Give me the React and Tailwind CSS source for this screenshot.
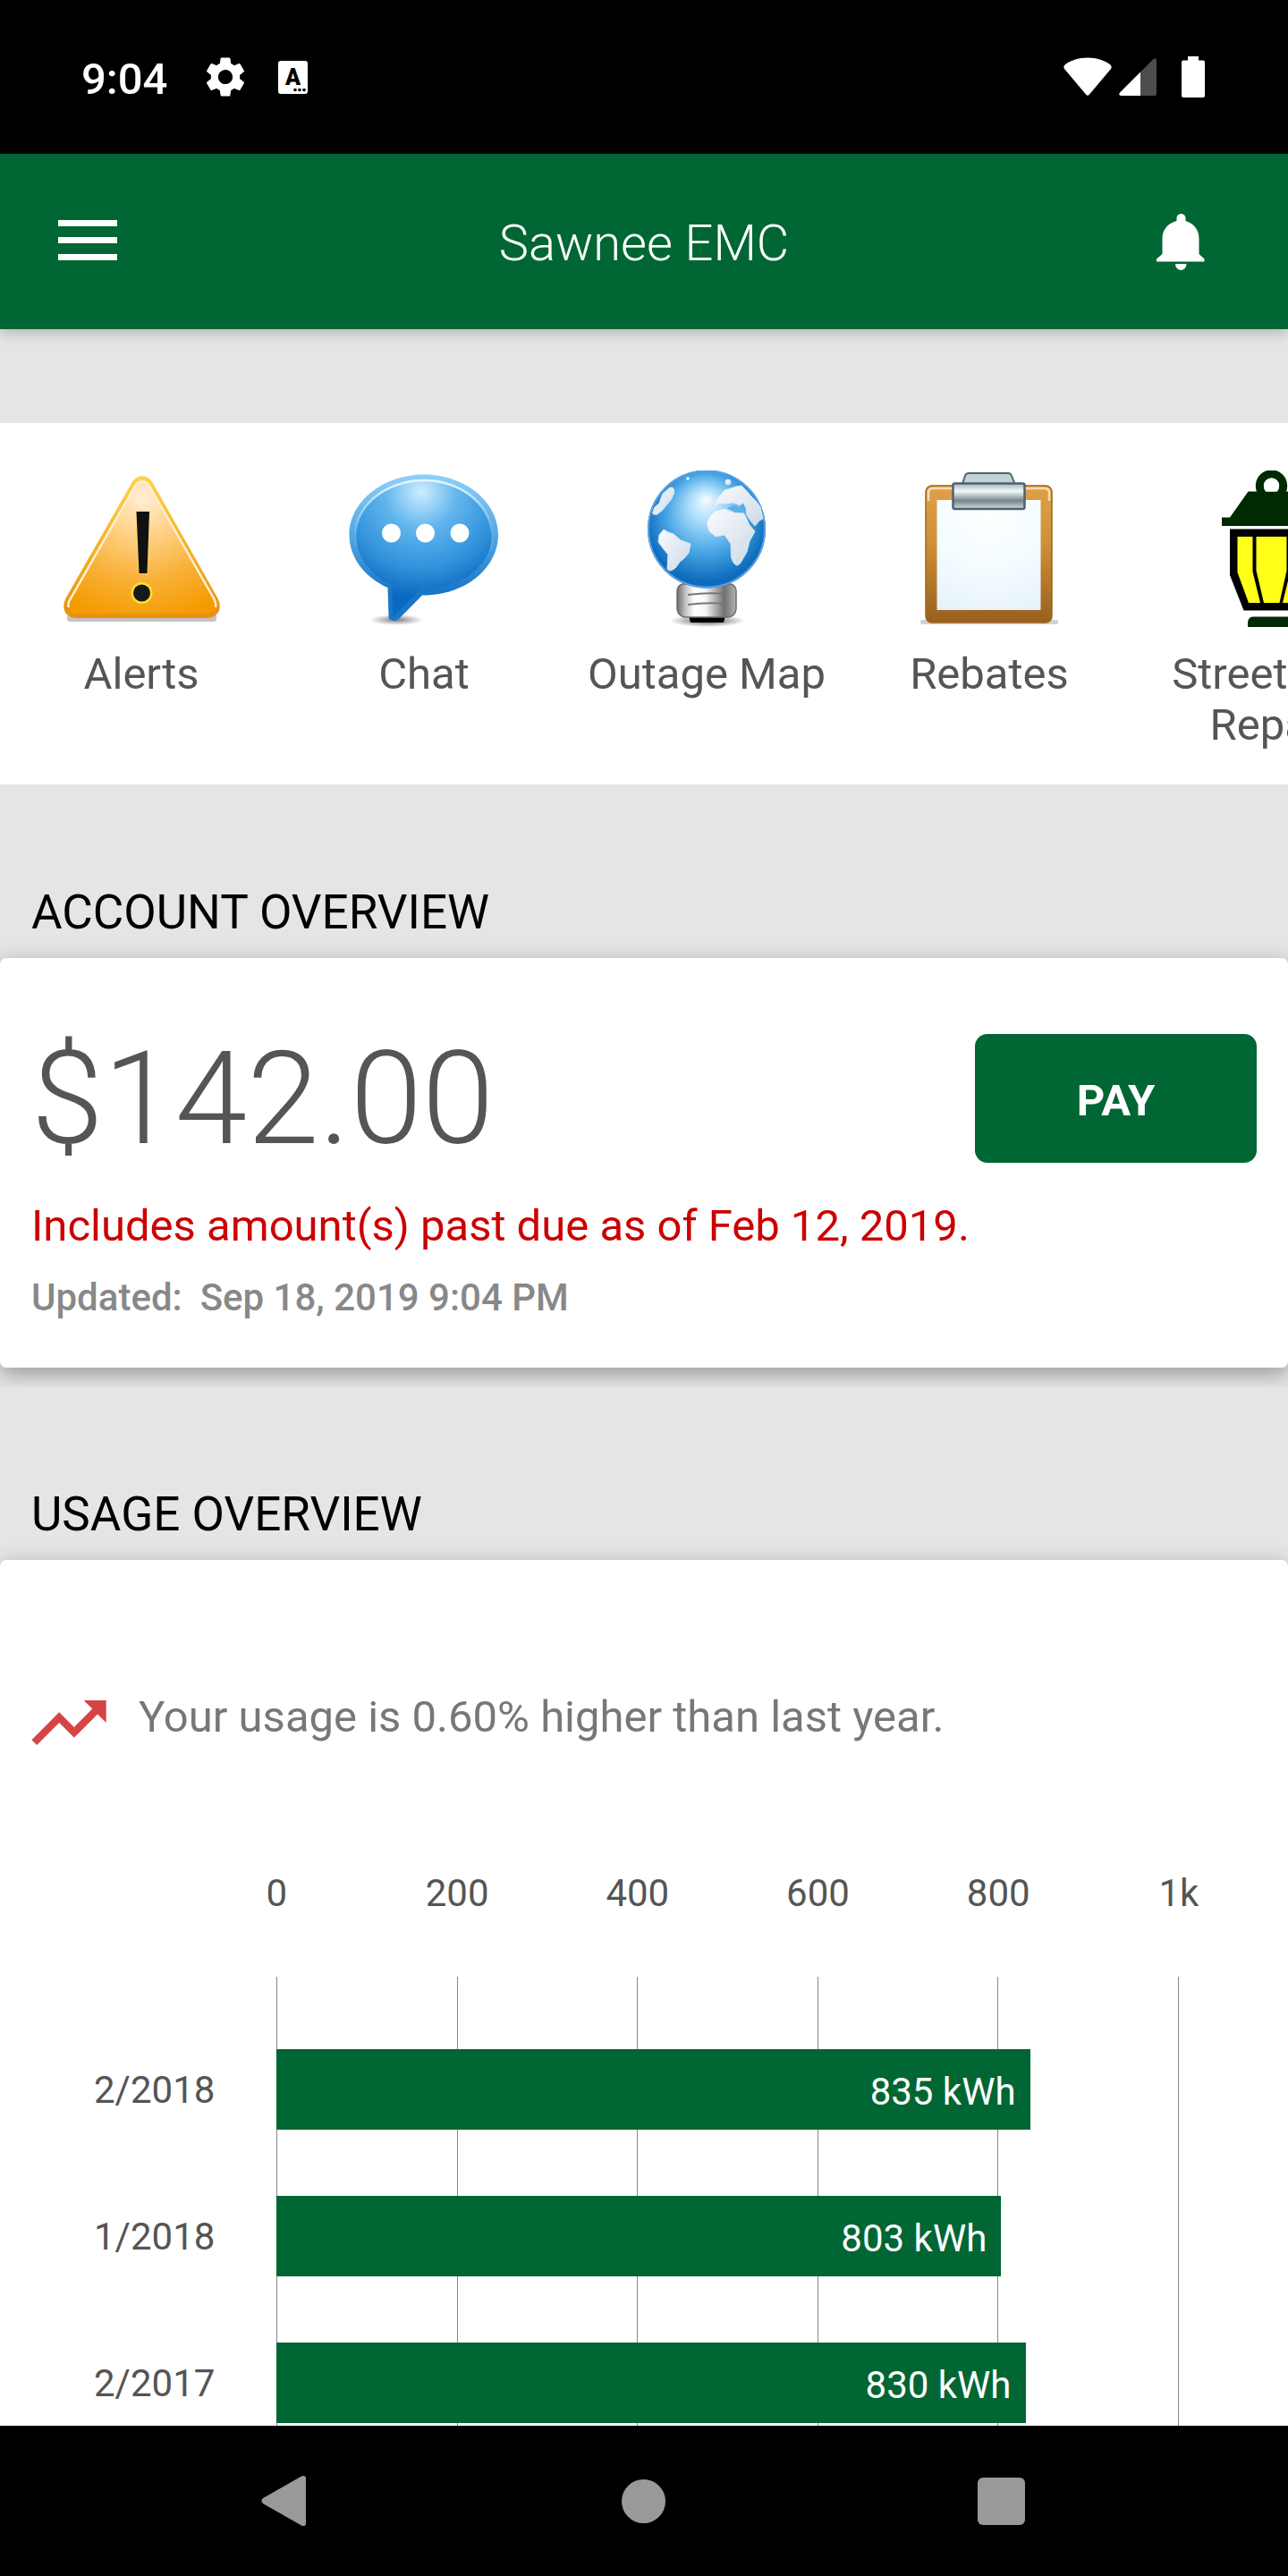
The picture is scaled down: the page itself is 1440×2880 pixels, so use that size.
import { MdSettings } from 'react-icons/md'

const usage = [
  { month: '2/2018', kwh: 835 },
  { month: '1/2018', kwh: 803 },
  { month: '2/2017', kwh: 830 },
];

const ticks = ['0', '200', '400', '600', '800', '1k'];

const maxKwh = 1000;


function AlertIcon() {
  return (
    <svg viewBox="0 0 175 175" className="size-[175px]" aria-hidden="true">
      <defs>
        <linearGradient id="alertEdge" x1="0" y1="0" x2="0" y2="1">
          <stop offset="0" stopColor="#ffd34a" />
          <stop offset="1" stopColor="#ea8f0f" />
        </linearGradient>
        <radialGradient id="alertFill" gradientUnits="userSpaceOnUse" cx="88" cy="30" r="140">
          <stop offset="0" stopColor="#ffeed6" />
          <stop offset="0.3" stopColor="#ffd38a" />
          <stop offset="0.65" stopColor="#f9b13a" />
          <stop offset="1" stopColor="#f49b00" />
        </radialGradient>
      </defs>
      <rect x="4" y="161" width="167" height="8" rx="3" fill="#c4c4c4" />
      <path d="M75 16C81 3 95 3 101 16L172 142C178 153 174 165 160 165H15C1 165 -3 153 3 142Z" fill="url(#alertEdge)" />
      <path d="M80 19C84 11 92 11 97 19L167 144C171 153 168 160 158 160H17C7 160 4 153 8 144Z" fill="url(#alertFill)" />
      <path d="M6 153Q4 149 8 143L79 19C84 10 92 10 97 19L168 143Q171 149 170 153" fill="none" stroke="#fff1d6" strokeWidth="2.5" />
      <path d="M81.500 46H96L93.500 115H84.500Z" fill="#111" stroke="#ffe04a" strokeOpacity="0.5" strokeWidth="2" paintOrder="stroke" />
      <circle cx="87.500" cy="137" r="9.500" fill="#16191c" stroke="#ffdf2e" strokeWidth="5" paintOrder="stroke" />
    </svg>
  );
}

function ChatIcon() {
  return (
    <svg viewBox="0 0 175 175" className="size-[175px]" aria-hidden="true">
      <defs>
        <radialGradient id="chatFill" gradientUnits="userSpaceOnUse" cx="84" cy="24" r="145">
          <stop offset="0" stopColor="#cdedff" />
          <stop offset="0.28" stopColor="#62b6ee" />
          <stop offset="0.6" stopColor="#2f90da" />
          <stop offset="0.82" stopColor="#0b68c0" />
          <stop offset="1" stopColor="#0b6cc4" />
        </radialGradient>
        <linearGradient id="chatEdge" x1="0" y1="0" x2="0" y2="1">
          <stop offset="0" stopColor="#8fd0fb" />
          <stop offset="0.45" stopColor="#4da3e2" />
          <stop offset="0.8" stopColor="#1a76c8" />
        </linearGradient>
        <linearGradient id="chatShine" x1="0" y1="0" x2="0" y2="1">
          <stop offset="0" stopColor="#e4f6ff" />
          <stop offset="0.8" stopColor="#e4f6ff" stopOpacity="0.1" />
        </linearGradient>
        <radialGradient id="chatShadow">
          <stop offset="0" stopColor="#000" stopOpacity="0.5" />
          <stop offset="1" stopColor="#000" stopOpacity="0" />
        </radialGradient>
      </defs>
      <ellipse cx="56" cy="167" rx="30" ry="6" fill="url(#chatShadow)" />
      <path d="M87 4.500C133 4.500 170 35 170 72S133 140 85 139.500L59 166Q53 171 47.500 165L46.500 131C20 119 3.500 97 3.500 72C3.500 35 41 4.500 87 4.500Z" fill="url(#chatEdge)" />
      <path d="M87 11C129 11 163 38 163 72S129 133 83 132.500L55 162Q52 164 52 161L51.500 128C27 117 11 96 11 72C11 38 45 11 87 11Z" fill="url(#chatFill)" />
      <path d="M11 85C4 40 45 11 87 11S170 40 162 88" fill="none" stroke="url(#chatShine)" strokeWidth="2.5" />
      <circle cx="50.500" cy="70" r="10.500" fill="#fff" />
      <circle cx="88.500" cy="70" r="10.500" fill="#fff" />
      <circle cx="127" cy="70" r="10.500" fill="#fff" />
    </svg>
  );
}

function OutageIcon() {
  return (
    <svg viewBox="0 0 175 175" className="size-[175px]" aria-hidden="true">
      <defs>
        <radialGradient id="globeFill" gradientUnits="userSpaceOnUse" cx="87" cy="66" r="96" fx="86" fy="32">
          <stop offset="0" stopColor="#f7fdff" />
          <stop offset="0.2" stopColor="#a9dbfb" />
          <stop offset="0.45" stopColor="#4ba8e6" />
          <stop offset="0.7" stopColor="#0f6dbd" />
          <stop offset="1" stopColor="#0a5cad" />
        </radialGradient>
        <linearGradient id="landFill" x1="0" y1="0" x2="1" y2="1">
          <stop offset="0" stopColor="#fafcff" />
          <stop offset="1" stopColor="#ccd8e6" />
        </linearGradient>
        <linearGradient id="screwFill" x1="0" y1="0" x2="1" y2="0">
          <stop offset="0" stopColor="#6a6a6a" />
          <stop offset="0.15" stopColor="#c8c8c8" />
          <stop offset="0.3" stopColor="#ffffff" />
          <stop offset="0.48" stopColor="#f6f6f6" />
          <stop offset="0.8" stopColor="#707070" />
          <stop offset="1" stopColor="#b5b5b5" />
        </linearGradient>
        <radialGradient id="bulbShadow">
          <stop offset="0.4" stopColor="#000" stopOpacity="0.4" />
          <stop offset="1" stopColor="#000" stopOpacity="0" />
        </radialGradient>
      </defs>
      <ellipse cx="88" cy="168" rx="42" ry="7" fill="url(#bulbShadow)" />
      <path d="M67 162H108L106 170H69Z" fill="#000" />
      <path d="M60 127H114Q120 129 120 135V155Q119 163 111 164H63Q55 163 54 155V135Q54 129 60 127Z" fill="url(#screwFill)" stroke="#6c6c6c" strokeWidth="1.5" />
      <path d="M66 139Q88 136 108 138M66 150Q88 147 108 149" fill="none" stroke="#777" strokeWidth="2" />
      <circle cx="87" cy="65.500" r="66" fill="url(#globeFill)" />
      <circle cx="87" cy="65.500" r="65" fill="none" stroke="#5a9fe4" strokeWidth="2" />
      <g fill="url(#landFill)" stroke="#d5e6f5" strokeWidth="1" strokeLinejoin="round">
        <path d="M87 59L91 51L97 45L107 43L118 47L129 48L135 61L141 68L135 79L132 91L125 103Q121 109 117 103L114.500 97L114 82L107 72L97 74L90 68Z" />
        <path d="M95 41L97 34L101 29L107 22L114 20L120 18L126 17L132 23L137 29L142 34L147 41L150 54L146 56L141 62L136 56L132 50L131 42L128 36L124 39L117 36L109 37L101 37Z" />
        <path d="M39 66L44 69L50 71L58 78L69 82L67 92L62 98L57 102L53 108Q46 115 43 110L44 94L39 88L33 80L34 72Z" />
        <path d="M46 19Q52 18 50.500 26L47 33L42 39L38 44L32 49Q25 50 27 46L29 41L34 37L36 31L38 26Z" />
        <circle cx="111" cy="13" r="3" />
        <circle cx="66" cy="9" r="1.500" />
      </g>
      <path d="M110 42L118 39L124 43L130 42L131 47L119 47Z" fill="#5cb0e8" />
    </svg>
  );
}

function RebateIcon() {
  return (
    <svg viewBox="0 0 175 175" className="size-[175px]" aria-hidden="true">
      <defs>
        <linearGradient id="boardFill" x1="0" y1="0" x2="0" y2="1">
          <stop offset="0" stopColor="#dfa04a" />
          <stop offset="0.4" stopColor="#cf9138" />
          <stop offset="1" stopColor="#98601f" />
        </linearGradient>
        <radialGradient id="paperFill" cx="0.5" cy="0.1" r="1.1">
          <stop offset="0" stopColor="#ffffff" />
          <stop offset="0.5" stopColor="#f3fcff" />
          <stop offset="1" stopColor="#e3eff9" />
        </radialGradient>
        <linearGradient id="clampFill" x1="0" y1="0" x2="0" y2="1">
          <stop offset="0" stopColor="#a3b3bd" />
          <stop offset="0.3" stopColor="#f2f8fa" />
          <stop offset="0.48" stopColor="#b5c4ca" />
          <stop offset="0.68" stopColor="#75858a" />
          <stop offset="1" stopColor="#d3dfe2" />
        </linearGradient>
      </defs>
      <rect x="10" y="167" width="154" height="5" rx="2" fill="#d2d2d2" />
      <rect x="16" y="17" width="141" height="153" rx="7" fill="url(#boardFill)" stroke="#9c651c" strokeWidth="1.500" />
      <path d="M19 34V25Q19 20 24 20H149Q154 20 154 25V34" fill="none" stroke="#f8dcae" strokeWidth="2.500" />
      <rect x="28.500" y="33" width="116" height="123" fill="url(#paperFill)" />
      <path d="M56.500 16L60 6Q61 3 64 3H108Q111 3 112 6L116 16Z" fill="#c3d1d8" stroke="#53646f" strokeWidth="2" />
      <rect x="46.500" y="14.500" width="80" height="28.500" rx="2" fill="url(#clampFill)" stroke="#4e6170" strokeWidth="2.500" />
    </svg>
  );
}

function StreetlightIcon() {
  return (
    <svg viewBox="0 0 175 175" className="size-[175px]" aria-hidden="true">
      <circle cx="86.500" cy="17" r="13.200" fill="none" stroke="#002a02" strokeWidth="9" />
      <path d="M60.500 23.500H112.500L133 52.500H142V62H31V52.500H40Z" fill="#002a02" />
      <path d="M80 23.500A8.500 8.500 0 1 1 93 23.500Z" fill="#fff" />
      <path d="M40 65.500H133V117L117.500 156.500H55.500L40 117Z" fill="#000" />
      <path d="M48.500 74H65.500V113L74 148H61L48.500 114Z" fill="#ffff18" />
      <path d="M69.500 74H103.500V112L95.500 148H78L69.500 112Z" fill="#ffff18" />
      <path d="M107.500 74H124.500V114L112 148H99L107.500 113Z" fill="#ffff18" />
      <path d="M60 175V171Q60 163.500 66 163.500H107Q113 163.500 113 171V175Z" fill="#002a02" />
    </svg>
  );
}

const links = [
  { label: 'Alerts', Icon: AlertIcon },
  { label: 'Chat', Icon: ChatIcon },
  { label: 'Outage Map', Icon: OutageIcon },
  { label: 'Rebates', Icon: RebateIcon },
  { label: 'Streetlight Repair', Icon: StreetlightIcon },
];


function StatusBar() {
  return (
    <div className="flex h-[172px] shrink-0 items-center justify-between bg-black pr-[93px] pl-[91px] text-white">
      <div className="flex items-center">
        <span className="pt-1 text-[49px] leading-[57px] font-medium">9:04</span>
        <MdSettings className="ml-[38px] size-[54px]" />
        <svg viewBox="0 0 33 37" className="ml-8 h-[37px] w-[33px]" aria-hidden="true">
          <rect width="33" height="37" rx="3" fill="#fff" />
          <text x="16.500" y="27" textAnchor="middle" fontFamily="Roboto, sans-serif" fontSize="25" fontWeight="900">A</text>
          <circle cx="19" cy="32.500" r="1.800" />
          <circle cx="24" cy="32.500" r="1.800" />
          <circle cx="29" cy="32.500" r="1.800" />
        </svg>
      </div>
      <div className="flex items-center">
        <svg viewBox="0 0 54 44" className="h-[44px] w-[54px]" fill="#fff" aria-hidden="true">
          <path d="M27 0.500C17 0.500 7 4 1.500 8.500Q-0.500 10.500 1 13L25 41.500Q27 44 29 41.500L53 13Q54.500 10.500 52.500 8.500C47 4 37 0.500 27 0.500Z" />
        </svg>
        <svg viewBox="0 0 42 42" className="ml-2 h-[42px] w-[42px]" aria-hidden="true">
          <path d="M24 15.500L38.500 1Q42 -1 42 3V40Q42 42 40 42H24Z" fill="#4d4d4d" />
          <path d="M24 15.500L1 38.500Q-1 42 3 42H24Z" fill="#fff" />
        </svg>
        <svg viewBox="0 0 26 46" className="ml-7 h-[46px] w-[26px]" fill="#fff" aria-hidden="true">
          <path d="M7 0H19V4.500H24Q26 4.500 26 6.500V44Q26 46 24 46H2Q0 46 0 44V6.500Q0 4.500 2 4.500H7Z" />
        </svg>
      </div>
    </div>
  );
}

function Header() {
  return (
    <header className="z-10 grid h-[196px] shrink-0 grid-cols-[82px_1fr_82px] items-center bg-[#006633] px-[65px] text-white shadow-[0_4px_14px_rgba(0,0,0,0.22)]">
      <button type="button" aria-label="Menu" className="flex w-[66px] flex-col gap-3 pb-1">
        <span className="h-[7px] bg-white"></span>
        <span className="h-[7px] bg-white"></span>
        <span className="h-[7px] bg-white"></span>
      </button>
      <h1 className="pt-1 text-center text-[56px] leading-[64px] font-light">Sawnee EMC</h1>
      <button type="button" aria-label="Notifications" className="justify-self-start">
        <svg viewBox="0 0 54 63" className="h-[63px] w-[54px]" fill="#fff" aria-hidden="true">
          <path d="M27.500 0C30.500 0 32.500 2.500 32.500 5V8C42 11 47.500 18 47.500 28V45L53.500 50.500V53.500H0V50.500L6.500 45V28C6.500 18 12 11 22.500 8V5C22.500 2.500 24.500 0 27.500 0Z" />
          <path d="M21 56H33.500A6.200 7 0 0 1 21 56Z" />
        </svg>
      </button>
    </header>
  );
}

function QuickLinks() {
  return (
    <nav className="mt-[105px] flex overflow-hidden bg-white pt-[53px] pb-[38px]">
      {links.map(({ label, Icon }) => (
        <a key={label} href="#" className="flex w-[316px] shrink-0 flex-col items-center gap-6 text-center text-[49px] leading-[57px] text-[#555]">
          <Icon />
          {label}
        </a>
      ))}
    </nav>
  );
}

function Section({ title, children }) {
  return (
    <section className="pt-[113px]">
      <h2 className="px-[35px] text-[53px] leading-[61px] text-black uppercase">{title}</h2>
      <div className="overflow-hidden pt-5 pb-[21px]">
        <div className="rounded-[7px] bg-white px-[35px] shadow-[0_7px_24px_rgba(0,0,0,0.34)]">
          {children}
        </div>
      </div>
    </section>
  );
}

function UsageChart() {
  return (
    <div className="grid grid-cols-[auto_1fr] pr-[87px] pl-[70px] text-[42px] leading-[49px] text-[#555]">
      <div className="col-start-2 flex justify-between pb-[69px]">
        {ticks.map((tick) => (
          <span key={tick} className="flex w-0 justify-center">{tick}</span>
        ))}
      </div>

      <div className="row-start-2 flex flex-col gap-[74px] pt-[81px] pr-[69px]">
        {usage.map(({ month }) => (
          <span key={month} className="flex h-[90px] items-center">{month}</span>
        ))}
      </div>

      <div className="col-start-2 row-start-2 grid">
        <div className="col-start-1 row-start-1 flex justify-between">
          {ticks.map((tick) => (
            <span key={tick} className="w-px bg-[#888]"></span>
          ))}
        </div>
        <div className="col-start-1 row-start-1 flex flex-col gap-[74px] pt-[81px] pb-20">
          {usage.map(({ month, kwh }) => (
            <div
              key={month}
              className="flex h-[90px] items-center justify-end bg-[#006633] pt-1 pr-4 text-white"
              style={{ width: `${(kwh / maxKwh) * 100}%` }}
            >
              {kwh} kWh
            </div>
          ))}
        </div>
      </div>
    </div>
  );
}

function NavBar() {
  return (
    <div className="grid h-[168px] shrink-0 grid-cols-3 items-center justify-items-center bg-black pr-[121px] pl-[119px]">
      <button type="button" aria-label="Back">
        <svg viewBox="0 0 54 60" className="h-[60px] w-[54px]" fill="#999" aria-hidden="true">
          <path d="M2 27L45 2.500Q50 0.500 50 5V55Q50 59.500 45 57.500L2 33Q-1 30 2 27Z" />
        </svg>
      </button>
      <button type="button" aria-label="Home" className="size-[49px] rounded-full bg-[#999]"></button>
      <button type="button" aria-label="Recents" className="size-[53px] rounded-md bg-[#999]"></button>
    </div>
  );
}

export default function App() {
  return (
    <div className="flex h-screen flex-col bg-[#e5e5e5] font-[Roboto,sans-serif]">
      <StatusBar />
      <Header />

      <main className="min-h-0 flex-1 overflow-hidden">
        <QuickLinks />

        <Section title="Account Overview">
          <div className="flex items-center justify-between pt-[71px]">
            <p className="text-[145px] leading-[172px] font-light text-[#555]">$142.00</p>
            <button type="button" className="h-36 w-[315px] rounded-[14px] bg-[#006633] pt-1 text-[49px] leading-[57px] font-bold text-white">
              PAY
            </button>
          </div>
          <p className="pt-7 text-[49px] leading-[57px] text-[#cc0000]">Includes amount(s) past due as of Feb 12, 2019.</p>
          <p className="flex gap-5 pt-[27px] pb-[54px] text-[42px] leading-[49px] font-medium text-[#888]">
            <span>Updated:</span>
            <span>Sep 18, 2019 9:04 PM</span>
          </p>
        </Section>

        <Section title="Usage Overview">
          <div className="flex items-start gap-9 pt-[147px] pb-[141px]">
            <svg viewBox="2 6 20 12" className="mt-2.5 h-[50px] w-[84px]" fill="#d64545" aria-hidden="true">
              <path d="M16 6l2.290 2.290-4.880 4.880-4-4L2 16.590 3.410 18l6-6 4 4 6.300-6.290L22 12V6z" />
            </svg>
            <p className="text-[49px] leading-[57px] text-[#777]">Your usage is 0.60% higher than last year.</p>
          </div>
          <UsageChart />
        </Section>
      </main>

      <NavBar />
    </div>
  );
}
